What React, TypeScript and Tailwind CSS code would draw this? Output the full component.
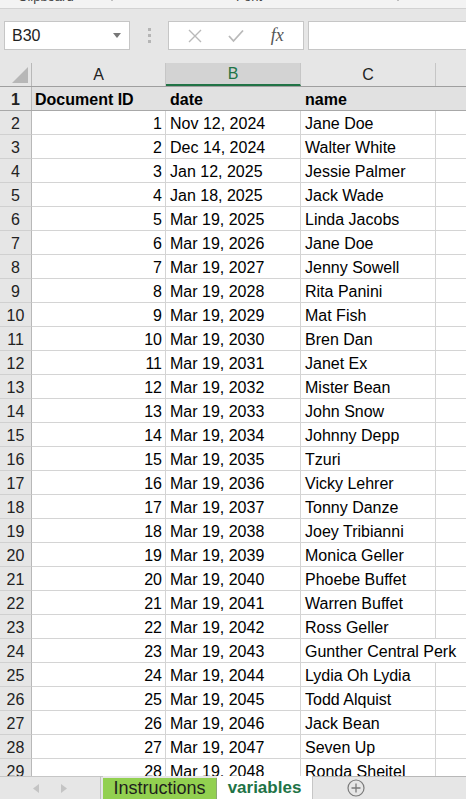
import React from 'react';

const rows: [string, string][] = [
  ['Nov 12, 2024', 'Jane Doe'],
  ['Dec 14, 2024', 'Walter White'],
  ['Jan 12, 2025', 'Jessie Palmer'],
  ['Jan 18, 2025', 'Jack Wade'],
  ['Mar 19, 2025', 'Linda Jacobs'],
  ['Mar 19, 2026', 'Jane Doe'],
  ['Mar 19, 2027', 'Jenny Sowell'],
  ['Mar 19, 2028', 'Rita Panini'],
  ['Mar 19, 2029', 'Mat Fish'],
  ['Mar 19, 2030', 'Bren Dan'],
  ['Mar 19, 2031', 'Janet Ex'],
  ['Mar 19, 2032', 'Mister Bean'],
  ['Mar 19, 2033', 'John Snow'],
  ['Mar 19, 2034', 'Johnny Depp'],
  ['Mar 19, 2035', 'Tzuri'],
  ['Mar 19, 2036', 'Vicky Lehrer'],
  ['Mar 19, 2037', 'Tonny Danze'],
  ['Mar 19, 2038', 'Joey Tribianni'],
  ['Mar 19, 2039', 'Monica Geller'],
  ['Mar 19, 2040', 'Phoebe Buffet'],
  ['Mar 19, 2041', 'Warren Buffet'],
  ['Mar 19, 2042', 'Ross Geller'],
  ['Mar 19, 2043', 'Gunther Central Perk'],
  ['Mar 19, 2044', 'Lydia Oh Lydia'],
  ['Mar 19, 2045', 'Todd Alquist'],
  ['Mar 19, 2046', 'Jack Bean'],
  ['Mar 19, 2047', 'Seven Up'],
  ['Mar 19, 2048', 'Ronda Sheitel'],
];

const Launcher = () => (
  <svg width="14" height="14" viewBox="0 0 14 14" className="shrink-0">
    <path d="M1 1h11v11" fill="none" stroke="#8a8a8a" strokeWidth="1" />
    <path d="M4 4l6 6M6 10h4V6" fill="none" stroke="#8a8a8a" strokeWidth="1" />
  </svg>
);

const RowHead = ({ n }: { n: number }) => (
  <div className="w-[32px] shrink-0 h-full flex items-center justify-center pt-[2px] bg-[#e6e6e6] border-r border-[#b8b8b8] text-[#222]">
    {n}
  </div>
);

export default function App() {
  return (
    <div className="w-[466px] h-[799px] overflow-hidden bg-[#e6e6e6] flex flex-col font-['Liberation_Sans',Arial,sans-serif] text-[16px] text-black">
      {/* ribbon bottom edge */}
      <div className="h-[9px] shrink-0 bg-[#f3f3f3] border-b border-[#d2d2d2] overflow-hidden">
        <div className="flex items-end h-[9px] text-[13px] leading-none text-[#444] mt-[-6px]">
          <span className="ml-[18px] w-[82px]">Clipboard</span>
          <Launcher />
          <span className="ml-[122px] w-[150px]">Font</span>
          <Launcher />
        </div>
      </div>

      {/* formula bar */}
      <div className="h-[54px] shrink-0 flex items-start pt-[12px] pl-[4px]">
        <div className="w-[126px] h-[29px] bg-white border border-[#c6c6c6] flex items-center justify-between pl-[7px] pr-[8px] text-[16px] text-[#222]">
          <span>B30</span>
          <svg width="8" height="5" viewBox="0 0 8 5"><path d="M0 0h8L4 5z" fill="#777" /></svg>
        </div>
        <div className="w-[38px] h-[29px] flex flex-col items-center justify-center gap-[3px]">
          <div className="w-[3px] h-[3px] bg-[#b5b5b5]" />
          <div className="w-[3px] h-[3px] bg-[#b5b5b5]" />
          <div className="w-[3px] h-[3px] bg-[#b5b5b5]" />
        </div>
        <div className="w-[136px] h-[29px] bg-white border border-[#c6c6c6] flex items-center justify-around px-[6px]">
          <svg width="14" height="14" viewBox="0 0 14 14"><path d="M1 1l12 12M13 1L1 13" stroke="#b9b9b9" strokeWidth="1.4" /></svg>
          <svg width="16" height="14" viewBox="0 0 16 14"><path d="M1 7l4.5 5L15 1.5" fill="none" stroke="#b9b9b9" strokeWidth="1.8" /></svg>
          <span className="font-['Liberation_Serif',serif] italic text-[18px] text-[#555]">fx</span>
        </div>
        <div className="flex-1 h-[29px] bg-white border border-[#c6c6c6] border-r-0 ml-[4px]" />
      </div>

      {/* grid */}
      <div className="h-[713px] shrink-0 overflow-hidden bg-white">
        {/* column headers */}
        <div className="h-[24px] flex bg-[#e6e6e6] border-b border-[#9f9f9f] text-[#222]">
          <div className="w-[32px] shrink-0 h-full border-r border-[#b8b8b8] flex items-end justify-end pr-[3px] pb-[3px]">
            <svg width="16" height="16" viewBox="0 0 16 16"><path d="M16 0v16H0z" fill="#b7b7b7" /></svg>
          </div>
          <div className="w-[134px] shrink-0 h-full flex items-center justify-center pt-[1px] border-r border-[#c6c6c6]">A</div>
          <div className="w-[135px] shrink-0 h-full flex items-center justify-center pt-[1px] bg-[#d3d3d3] text-[#217346] border-b-2 border-[#217346] border-r border-r-[#c6c6c6]">B</div>
          <div className="w-[135px] shrink-0 h-full flex items-center justify-center pt-[1px] border-r border-[#c6c6c6]">C</div>
          <div className="flex-1" />
        </div>

        {/* row 1 */}
        <div className="h-[24px] flex bg-[#e1e1e1] border-b border-[#a8a8a8] font-bold">
          <RowHead n={1} />
          <div className="w-[134px] shrink-0 pl-[3px] pt-[2px] flex items-center">Document ID</div>
          <div className="w-[135px] shrink-0 pl-[4px] pt-[2px] flex items-center">date</div>
          <div className="w-[135px] shrink-0 pl-[4px] pt-[2px] flex items-center">name</div>
          <div className="flex-1" />
        </div>

        {rows.map(([date, name], i) => (
          <div key={i} className="h-[24px] flex">
            <div className="w-[32px] shrink-0 h-full flex items-center justify-center pt-[2px] bg-[#e6e6e6] border-r border-b border-r-[#b8b8b8] border-b-[#d0d0d0] text-[#222]">
              {i + 2}
            </div>
            <div className="w-[134px] shrink-0 h-full border-r border-b border-[#d4d4d4] flex items-center justify-end pr-[3px] pt-[2px]">{i + 1}</div>
            <div className="w-[135px] shrink-0 h-full border-r border-b border-[#d4d4d4] flex items-center pl-[4px] pt-[2px] whitespace-nowrap">{date}</div>
            <div className={`w-[135px] shrink-0 h-full border-b border-[#d4d4d4] flex items-center pl-[4px] pt-[2px] whitespace-nowrap overflow-visible relative z-10 ${name === 'Gunther Central Perk' ? '' : 'border-r'}`}>{name}</div>
            <div className="flex-1 h-full border-b border-[#d4d4d4]" />
          </div>
        ))}
      </div>

      {/* sheet tabs */}
      <div className="h-[23px] shrink-0 flex bg-[#e6e6e6]">
        <div className="w-[101px] shrink-0 h-full border-t border-[#c6c6c6] border-r border-r-[#c0c0c0] flex items-center justify-center gap-[22px]">
          <svg width="6" height="9" viewBox="0 0 6 9"><path d="M6 0v9L0 4.5z" fill="#c4c4c4" /></svg>
          <svg width="6" height="9" viewBox="0 0 6 9"><path d="M0 0v9l6-4.5z" fill="#c4c4c4" /></svg>
        </div>
        <div className="w-[2px] shrink-0 border-t border-[#c6c6c6]" />
        <div className="w-[114px] shrink-0 h-[21px] mt-[2px] bg-[#92d050] border-r border-[#8aa872] flex items-center justify-center text-[18px] text-[#1e1e1e]">
          Instructions
        </div>
        <div className="w-[95px] shrink-0 h-full bg-white flex items-center justify-center font-bold text-[17px] text-[#217346]">
          variables
        </div>
        <div className="flex-1 h-full border-t border-[#b8b8b8] border-l border-l-[#c6c6c6] flex items-center pl-[34px]">
          <svg width="18" height="18" viewBox="0 0 18 18">
            <circle cx="9" cy="9" r="8" fill="none" stroke="#7a7a7a" strokeWidth="1.2" />
            <path d="M9 4.5v9M4.5 9h9" stroke="#7a7a7a" strokeWidth="1.3" />
          </svg>
        </div>
      </div>
    </div>
  );
}
